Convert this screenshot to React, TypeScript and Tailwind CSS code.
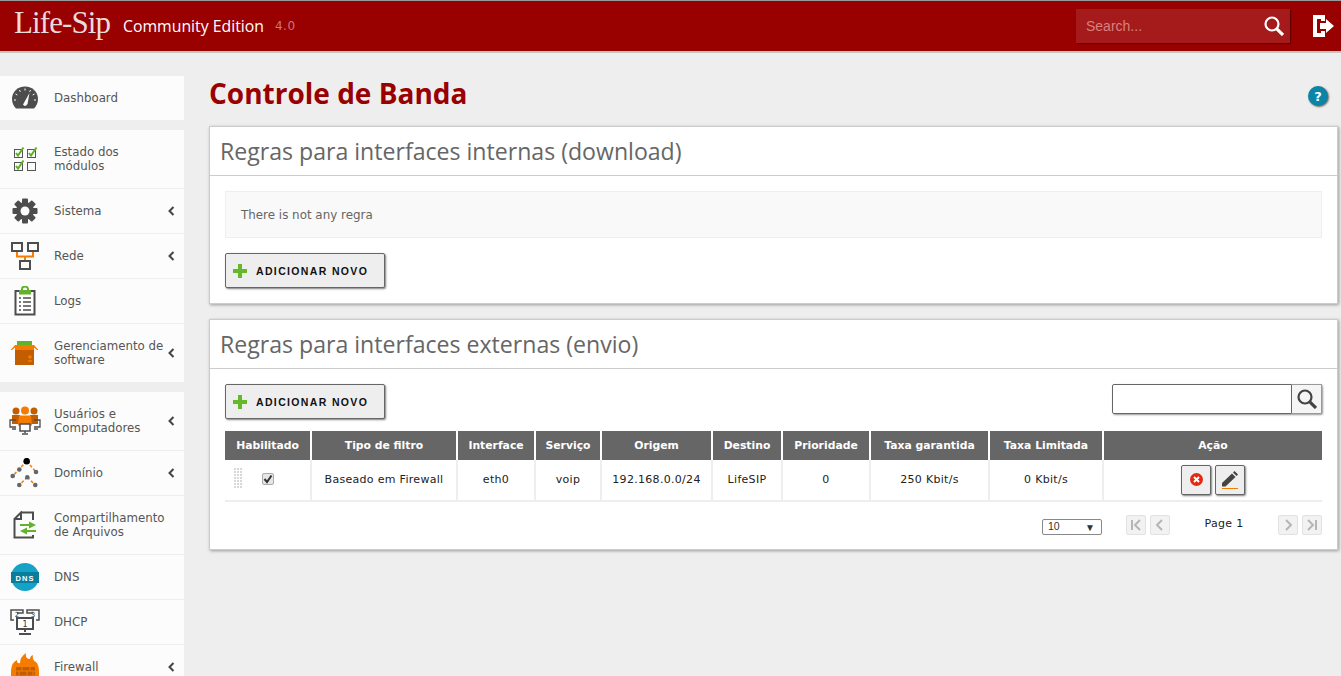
import React from 'react';

const Chevron = () => (
  <svg width="7" height="10" viewBox="0 0 7 10" className="shrink-0">
    <path d="M5.5 1 L1.5 5 L5.5 9" fill="none" stroke="#444" strokeWidth="2" />
  </svg>
);

const DashIcon = () => (
  <svg width="26" height="24" viewBox="0 0 26 24">
    <path d="M13 0.500C5.500 0.500 0 6 0 13c0 4 1.500 7 4 9.500h18c2.500-2.500 4-5.500 4-9.500C26 6 20.500 0.500 13 0.500z" fill="#4d4d4d" />
    <path d="M13 2.500v2M7.500 4l0.800 1.800M3.500 8l1.800 1M2 14h2M18.500 4l-0.800 1.800M22.500 8l-1.800 1M24 14h-2" stroke="#fff" strokeWidth="1" />
    <path d="M17.500 7 L15.500 18 Q13 21.500 11 18.500 Z" fill="#fff" />
  </svg>
);

const CheckBox = ({ on }: { on: boolean }) => (
  <g>
    <rect x="0.5" y="2.5" width="8" height="8" fill="none" stroke="#555" />
    {on && <path d="M2 6 L4 8.500 L9.500 0.500" fill="none" stroke="#5cb125" strokeWidth="2" />}
  </g>
);

const ModulesIcon = () => (
  <svg width="26" height="26" viewBox="0 0 26 26">
    <g transform="translate(2,1)"><CheckBox on /></g>
    <g transform="translate(15,1)"><CheckBox on /></g>
    <g transform="translate(2,14)"><CheckBox on /></g>
    <g transform="translate(15,14)"><CheckBox on={false} /></g>
  </svg>
);

const GearIcon = () => (
  <svg width="26" height="26" viewBox="0 0 26 26">
    <g fill="#4d4d4d">
      {[0, 45, 90, 135].map((a) => (
        <rect key={a} x="10" y="0.5" width="6" height="25" rx="1" transform={`rotate(${a} 13 13)`} />
      ))}
      <circle cx="13" cy="13" r="9" />
    </g>
    <circle cx="13" cy="13" r="4.5" fill="#fcfcfc" />
  </svg>
);

const NetIcon = () => (
  <svg width="30" height="30" viewBox="0 0 30 30">
    <path d="M7 11v4.500h16V11M15 15.500V20" fill="none" stroke="#f57c00" strokeWidth="2" />
    <g fill="none" stroke="#4d4d4d" strokeWidth="2">
      <rect x="2" y="2" width="10" height="8" />
      <rect x="18" y="2" width="10" height="8" />
      <rect x="10" y="20" width="10" height="8" />
    </g>
  </svg>
);

const LogsIcon = () => (
  <svg width="22" height="30" viewBox="0 0 22 30">
    <path d="M5 5H1.500v23.500h19V5H17" fill="#fff" stroke="#4d4d4d" strokeWidth="2" />
    <path d="M8 4V3a3 2.500 0 0 1 6 0v1" fill="none" stroke="#62b22b" strokeWidth="2" />
    <rect x="5" y="4" width="12" height="4.500" fill="#62b22b" />
    <path d="M5 12h2M9 12h8M5 16h2M9 16h8M5 20h2M9 20h8M5 24h2M9 24h8" stroke="#4d4d4d" strokeWidth="1.500" />
  </svg>
);

const BoxIcon = () => (
  <svg width="30" height="26" viewBox="0 0 30 26">
    <rect x="7" y="1" width="15" height="4" fill="#62b22b" />
    <path d="M5 5h19v6H5z" fill="#f57c00" />
    <path d="M0.500 10 L5 5 L7 6 L2 10z M28.500 10 L24 5 L22 6 L27 10z" fill="#f57c00" />
    <rect x="5" y="10" width="19" height="15" fill="#c25e00" />
    <path d="M20 15v4M18 17h4M18 21h4" stroke="#f57c00" strokeWidth="1.300" />
  </svg>
);

const UsersIcon = () => (
  <svg width="32" height="30" viewBox="0 0 32 30">
    <g fill="#c25e00">
      <circle cx="7" cy="5" r="3.500" />
      <path d="M3 9h8v9H3z" />
      <circle cx="25" cy="5" r="3.500" />
      <path d="M21 9h8v9h-8z" />
    </g>
    <g fill="#f57c00">
      <circle cx="16" cy="4.500" r="4" />
      <path d="M10 9.500h12l1 10H9z" />
    </g>
    <path d="M7 14H1v7h6M25 14h6v7h-6M3 23h4M25 23h4" fill="none" stroke="#4d4d4d" strokeWidth="1.300" />
    <rect x="11" y="18" width="10" height="7" fill="#fff" stroke="#4d4d4d" strokeWidth="1.500" />
    <path d="M16 25v2M13 28h6" stroke="#4d4d4d" strokeWidth="1.500" />
  </svg>
);

const DomainIcon = () => (
  <svg width="30" height="30" viewBox="0 0 30 30">
    <path d="M16.700 3.200 L2.700 18M16.700 3.200 L26 14M17.300 19.300 L9.300 27M17.300 19.300 L25.300 27" stroke="#f57c00" strokeWidth="1.500" strokeDasharray="3 2" fill="none" />
    <g fill="#666">
      <circle cx="9.300" cy="11.500" r="2.300" />
      <circle cx="2.700" cy="18" r="2.300" />
      <circle cx="17.300" cy="19.300" r="2.300" />
      <circle cx="26" cy="14" r="2.300" />
      <circle cx="9.300" cy="27" r="2.300" />
      <circle cx="25.300" cy="27" r="2.300" />
    </g>
    <circle cx="16.700" cy="3.200" r="3.300" fill="#000" />
  </svg>
);

const ShareIcon = () => (
  <svg width="24" height="28" viewBox="0 0 24 28">
    <path d="M8 1.500H20V9M20 24v2.500H1.500V8L8 1.500V8H1.500" fill="none" stroke="#4d4d4d" strokeWidth="2" />
    <path d="M7 13h9v-2.500l7 3.500-7 3.500V15H7zM23 19h-9v-2.500l-7 3.500 7 3.500V21h9z" fill="#62b22b" />
  </svg>
);

const DnsIcon = () => (
  <svg width="28" height="28" viewBox="0 0 28 28">
    <circle cx="14" cy="14" r="14" fill="#14a3c7" />
    <rect x="0" y="9" width="28" height="11" fill="#0a7d9c" />
    <text x="14" y="17.500" textAnchor="middle" fontSize="7.500" fontWeight="700" fill="#fff" letterSpacing="1" fontFamily="Liberation Sans, sans-serif">DNS</text>
  </svg>
);

const DhcpIcon = () => (
  <svg width="30" height="26" viewBox="0 0 30 26">
    <g fill="none" stroke="#4d4d4d" strokeWidth="1.500">
      <path d="M4 11H1V1h12v3H7M26 11h3V1H17v3h6" />
      <rect x="7" y="9" width="16" height="11" strokeWidth="2" fill="#fff" />
    </g>
    <path d="M15 20v3M9 25h12" stroke="#4d4d4d" strokeWidth="2" />
    <text x="15" y="18" textAnchor="middle" fontSize="8" fill="#333" fontFamily="DejaVu Sans, sans-serif">1</text>
    <text x="7" y="8" textAnchor="middle" fontSize="7" fill="#333" fontFamily="DejaVu Sans, sans-serif">2</text>
    <text x="23" y="8" textAnchor="middle" fontSize="7" fill="#333" fontFamily="DejaVu Sans, sans-serif">3</text>
  </svg>
);

const FireIcon = () => (
  <svg width="30" height="30" viewBox="0 0 30 30">
    <path d="M1 18 Q2 10 7 8 Q7 12 10 11 Q10 5 16 1 Q15 7 20 7 Q20 4 23 3 Q22 8 26 10 Q29 13 29 20 V30 H1z" fill="#f57c00" />
    <path d="M6 15h19v15H6z" fill="#c25e00" />
    <path d="M6 19h19M6 24h19M12 15v4M20 15v4M9 19v5M17 19v5M23 19v5M12 24v5M20 24v5" stroke="#f57c00" strokeWidth="1" />
  </svg>
);

const Magnifier = ({ color, size }: { color: string; size: number }) => (
  <svg width={size} height={size} viewBox="0 0 20 20">
    <circle cx="8" cy="8" r="6.500" fill="none" stroke={color} strokeWidth="2.200" />
    <path d="M12.800 12.800 L19 19" stroke={color} strokeWidth="3.200" />
  </svg>
);

type Item = { label: string[]; icon: React.ReactNode; h: string; sub?: boolean };

const menuTop: Item[] = [
  { label: ['Estado dos', 'módulos'], icon: <ModulesIcon />, h: 'h-[58px]' },
  { label: ['Sistema'], icon: <GearIcon />, h: 'h-[44px]', sub: true },
  { label: ['Rede'], icon: <NetIcon />, h: 'h-[44px]', sub: true },
  { label: ['Logs'], icon: <LogsIcon />, h: 'h-[44px]' },
  { label: ['Gerenciamento de', 'software'], icon: <BoxIcon />, h: 'h-[58px]', sub: true },
];

const menuBottom: Item[] = [
  { label: ['Usuários e', 'Computadores'], icon: <UsersIcon />, h: 'h-[58px]', sub: true },
  { label: ['Domínio'], icon: <DomainIcon />, h: 'h-[44px]', sub: true },
  { label: ['Compartilhamento', 'de Arquivos'], icon: <ShareIcon />, h: 'h-[58px]' },
  { label: ['DNS'], icon: <DnsIcon />, h: 'h-[44px]' },
  { label: ['DHCP'], icon: <DhcpIcon />, h: 'h-[44px]' },
  { label: ['Firewall'], icon: <FireIcon />, h: 'h-[44px]', sub: true },
];

const MenuRow = ({ item, last }: { item: Item; last?: boolean }) => (
  <div className={`${item.h} flex items-center relative bg-[#fcfcfc] ${last ? '' : 'border-b border-[#eeeeee] box-content'}`}>
    <div className="w-[54px] shrink-0 flex items-center justify-center pr-[4px]">{item.icon}</div>
    <div className="flex-1 text-[11.800px] leading-[14px] text-[#555555]">
      {item.label.map((l) => (
        <div key={l} className="whitespace-nowrap">{l}</div>
      ))}
    </div>
    {item.sub && (
      <div className="absolute right-[9px] top-1/2 -translate-y-1/2">
        <Chevron />
      </div>
    )}
  </div>
);

const AddButton = () => (
  <button className="w-[160px] h-[35px] flex items-center bg-[#eeeeee] border border-[#666666] rounded-[2px] shadow-[1px_1px_2px_rgba(0,0,0,0.5)] pl-[7px]">
    <svg width="14" height="14" viewBox="0 0 14 14">
      <path d="M5 0h4v5h5v4H9v5H5V9H0V5h5z" fill="#66b82b" />
    </svg>
    <span className="ml-[9px] pt-[2px] text-[10.500px] font-bold tracking-[1.350px] text-[#111111] font-['Liberation_Sans',sans-serif]">ADICIONAR NOVO</span>
  </button>
);

const columns = [
  { title: 'Habilitado', w: 'w-[87px]', value: '' },
  { title: 'Tipo de filtro', w: 'w-[146px]', value: 'Baseado em Firewall' },
  { title: 'Interface', w: 'w-[78px]', value: 'eth0' },
  { title: 'Serviço', w: 'w-[66px]', value: 'voip' },
  { title: 'Origem', w: 'w-[111px]', value: '192.168.0.0/24' },
  { title: 'Destino', w: 'w-[70px]', value: 'LifeSIP' },
  { title: 'Prioridade', w: 'w-[88px]', value: '0' },
  { title: 'Taxa garantida', w: 'w-[119px]', value: '250 Kbit/s' },
  { title: 'Taxa Limitada', w: 'w-[114px]', value: '0 Kbit/s' },
  { title: 'Ação', w: 'flex-1', value: '' },
];

const PageBtn = ({ d }: { d: string }) => (
  <div className="w-[20px] h-[20px] bg-[#f2f2f2] border border-[#e2e2e2] rounded-[2px] flex items-center justify-center">
    <svg width="14" height="14" viewBox="0 0 14 14">
      <path d={d} fill="none" stroke="#b5b5b5" strokeWidth="2" />
    </svg>
  </div>
);

const PanelTitle = ({ children }: { children: React.ReactNode }) => (
  <div className="h-[49px] border-b border-[#cccccc] pl-[10px] flex items-center text-[23.100px] text-[#666666] font-['Open_Sans',sans-serif]">
    {children}
  </div>
);

const App: React.FC = () => {
  return (
    <div className="w-[1341px] h-[676px] overflow-hidden bg-[#eeeeee] font-['DejaVu_Sans',sans-serif]">
      {/* Header */}
      <header className="h-[53px] border-t border-[#999999] border-b-2 border-b-[#c4c4c4] bg-[#990000] flex items-center">
        <span className="ml-[14px] w-[109px] -mt-[5px] text-[31px] tracking-[-0.900px] text-[#eadcdc] font-['Liberation_Serif',serif]">Life-Sip</span>
        <span className="pt-[1px] text-[15.800px] text-white font-['Open_Sans',sans-serif]">Community Edition</span>
        <span className="ml-[11px] text-[12px] text-[#c9777a] tracking-[0.5px]">4.0</span>
        <div className="ml-auto w-[214px] h-[34px] bg-[#a51a1a] shadow-[1px_1px_1px_rgba(70,0,0,0.7)] flex items-center pl-[10px] pr-[6px]">
          <span className="flex-1 text-[14px] text-[#d98080] font-['Liberation_Sans',sans-serif]">Search...</span>
          <Magnifier color="#ffffff" size={20} />
        </div>
        <svg width="22" height="22" viewBox="0 0 22 22" className="ml-[23px] mr-[6px]">
          <path d="M0 0h12v6H8V4H4v14h4v-2h4v6H0z" fill="#fff" />
          <path d="M7 8h6V4l8 7-8 7v-4H7z" fill="#fff" />
        </svg>
      </header>

      <div className="flex">
        {/* Sidebar */}
        <aside className="w-[184px] shrink-0 pt-[23px]">
          <div className="h-[44px] flex items-center bg-[#fcfcfc]">
            <div className="w-[54px] shrink-0 flex items-center justify-center pr-[4px]"><DashIcon /></div>
            <span className="pt-[1px] text-[11.800px] text-[#555555]">Dashboard</span>
          </div>
          <div className="mt-[10px]">
            {menuTop.map((m, i) => (
              <MenuRow key={m.label[0]} item={m} last={i === menuTop.length - 1} />
            ))}
          </div>
          <div className="mt-[10px]">
            {menuBottom.map((m, i) => (
              <MenuRow key={m.label[0]} item={m} last={i === menuBottom.length - 1} />
            ))}
          </div>
        </aside>

        {/* Content */}
        <main className="flex-1 pl-[25px] pr-[3px]">
          <div className="h-[73px] flex items-start justify-between">
            <h1 className="mt-[20px] text-[28px] leading-[40px] font-bold text-[#990000] font-['Open_Sans',sans-serif]">Controle de Banda</h1>
            <div className="mt-[33px] mr-[10px] w-[20px] h-[20px] rounded-full bg-[#0b84a5] shadow-[1px_1px_2px_rgba(0,0,0,0.6)] flex items-center justify-center text-white text-[13px] font-bold leading-none">?</div>
          </div>

          <section className="h-[178px] bg-white border border-[#cccccc] shadow-[1px_1px_3px_rgba(0,0,0,0.35)]">
            <PanelTitle>Regras para interfaces internas (download)</PanelTitle>
            <div className="px-[15px] pt-[15px]">
              <div className="h-[47px] pt-[2px] bg-[#f9f9f9] border border-[#eeeeee] flex items-center pl-[15px] text-[11.900px] text-[#666666]">
                There is not any regra
              </div>
              <div className="mt-[15px]"><AddButton /></div>
            </div>
          </section>

          <section className="mt-[15px] h-[231px] bg-white border border-[#cccccc] shadow-[1px_1px_3px_rgba(0,0,0,0.35)]">
            <PanelTitle>Regras para interfaces externas (envio)</PanelTitle>
            <div className="px-[15px]">
              <div className="pt-[15px] h-[62px] flex items-start justify-between">
                <AddButton />
                <div className="flex shadow-[1px_1px_2px_rgba(0,0,0,0.4)] rounded-[2px]">
                  <div className="w-[180px] h-[30px] bg-white border border-[#666666] rounded-l-[2px]" />
                  <div className="w-[30px] h-[30px] bg-[#f5f5f5] border border-l-0 border-[#999999] flex items-center justify-center">
                    <Magnifier color="#444444" size={20} />
                  </div>
                </div>
              </div>

              {/* Table */}
              <div className="flex h-[29px] bg-[#666666]">
                {columns.map((c, i) => (
                  <div
                    key={c.title}
                    className={`${c.w} pt-[2px] flex items-center justify-center text-[10.800px] font-bold text-white ${i < columns.length - 1 ? 'border-r-2 border-white' : ''}`}
                  >
                    {c.title}
                  </div>
                ))}
              </div>
              <div className="flex h-[42px] border-b-2 border-[#eeeeee]">
                {columns.map((c, i) => (
                  <div
                    key={c.title}
                    className={`${c.w} relative flex items-center justify-center text-[11px] tracking-[0.3px] text-[#222222] ${i < columns.length - 1 ? 'border-r-2 border-[#eeeeee]' : ''}`}
                  >
                    {i === 0 && (
                      <>
                        <svg width="9" height="21" viewBox="0 0 9 21" className="absolute left-[9px] top-[8px]">
                          <path d="M0 1h9M0 4h9M0 7h9M0 10h9M0 13h9M0 16h9M0 19h9" stroke="#d8d8d8" strokeWidth="2" strokeDasharray="2 1" />
                        </svg>
                        <div className="-mt-[2px] w-[12px] h-[12px] bg-[#e6e6e6] border border-[#aaaaaa] rounded-[2px] flex items-center justify-center">
                          <svg width="10" height="10" viewBox="0 0 10 10">
                            <path d="M1.500 5 L4 8 L8.500 1.500" fill="none" stroke="#333" strokeWidth="2" />
                          </svg>
                        </div>
                      </>
                    )}
                    {c.value}
                    {i === 9 && (
                      <div className="flex gap-[4px] -mt-[1px]">
                        <div className="w-[30px] h-[30px] bg-[#eeeeee] border border-[#666666] rounded-[2px] shadow-[1px_1px_2px_rgba(0,0,0,0.5)] flex items-center justify-center">
                          <svg width="13" height="13" viewBox="0 0 13 13">
                            <circle cx="6.500" cy="6.500" r="6.500" fill="#e8280e" />
                            <path d="M4 4l5 5M9 4l-5 5" stroke="#fff" strokeWidth="2" />
                          </svg>
                        </div>
                        <div className="w-[30px] h-[30px] bg-[#eeeeee] border border-[#666666] rounded-[2px] shadow-[1px_1px_2px_rgba(0,0,0,0.5)] flex items-center justify-center">
                          <svg width="18" height="18" viewBox="0 0 18 18">
                            <path d="M1 12 L11 2.500 L14.500 6 L4.500 15.500 H1z M12 1.500 L13.500 0 L17 3.500 L15.500 5z" fill="#444" />
                            <path d="M1 17.500H17" stroke="#f57c00" strokeWidth="1" />
                          </svg>
                        </div>
                      </div>
                    )}
                  </div>
                ))}
              </div>

              {/* Pagination */}
              <div className="mt-[13px] h-[20px] flex items-center justify-end">
                <div className="mr-[24px] w-[60px] h-[16px] mt-[4px] bg-white border border-[#888888] rounded-[2px] flex items-center justify-between pl-[5px] pr-[6px] text-[10.500px] text-[#333333] font-['Liberation_Sans',sans-serif]">
                  <span>10</span>
                  <span className="text-[10px]">▼</span>
                </div>
                <PageBtn d="M3 2v10M11 2L6 7l5 5" />
                <div className="ml-[4px]"><PageBtn d="M9 2L4 7l5 5" /></div>
                <span className="w-[108px] text-center -mt-[2px] text-[11px] tracking-[0.3px] text-[#222222]">Page 1</span>
                <PageBtn d="M5 2l5 5-5 5" />
                <div className="ml-[4px]"><PageBtn d="M11 2v10M3 2l5 5-5 5" /></div>
              </div>
            </div>
          </section>
        </main>
      </div>
    </div>
  );
};

export default App;
